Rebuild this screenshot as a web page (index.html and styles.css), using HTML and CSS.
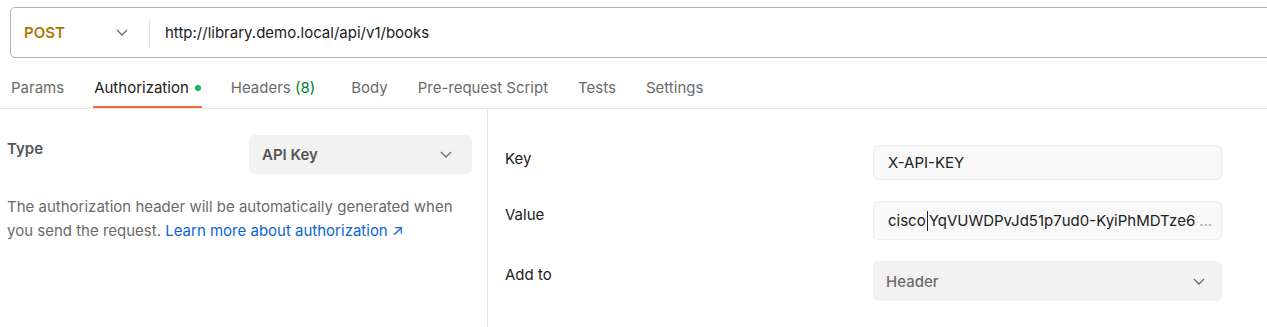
FILE: index.html
```html
<!DOCTYPE html>
<html lang="en">
<head>
<meta charset="utf-8">
<title>Request</title>
<link rel="stylesheet" href="styles.css">
</head>
<body>
<div class="app">
  <div class="top">
    <div class="urlbar">
      <div class="method">
        <span class="method-name">POST</span>
        <svg class="chev" width="12" height="7" viewBox="0 0 12 7"><path d="M1 1l5 5 5-5" fill="none" stroke="#6b6b6b" stroke-width="1.3"/></svg>
      </div>
      <div class="divider"></div>
      <div class="url">http://library.demo.local/api/v1/books</div>
    </div>
  </div>
  <nav class="tabs">
    <div class="tab">Params</div>
    <div class="tab active">Authorization<span class="dot"></span></div>
    <div class="tab tab-headers">Headers <span class="count">(8)</span></div>
    <div class="tab">Body</div>
    <div class="tab">Pre-request Script</div>
    <div class="tab">Tests</div>
    <div class="tab">Settings</div>
  </nav>
  <div class="content">
    <section class="left">
      <div class="type-row">
        <div class="type-label">Type</div>
        <div class="select type-select">
          <span>API Key</span>
          <svg class="chev" width="12" height="7" viewBox="0 0 12 7"><path d="M1 1l5 5 5-5" fill="none" stroke="#6b6b6b" stroke-width="1.3"/></svg>
        </div>
      </div>
      <div class="desc">
        <div class="desc-line">The authorization header will be automatically generated when</div>
        <div class="desc-line">you send the request. <a class="link" href="#">Learn more about authorization ↗</a></div>
      </div>
    </section>
    <section class="right">
      <div class="row">
        <div class="label">Key</div>
        <div class="input key-input">X-API-KEY</div>
      </div>
      <div class="row">
        <div class="label">Value</div>
        <div class="input value-input"><span>cisco</span><span class="caret"></span><span>YqVUWDPvJd51p7ud0-KyiPhMDTze6</span><span class="more">...</span></div>
      </div>
      <div class="row">
        <div class="label">Add to</div>
        <div class="select addto-select">
          <span>Header</span>
          <svg class="chev" width="12" height="7" viewBox="0 0 12 7"><path d="M1 1l5 5 5-5" fill="none" stroke="#6b6b6b" stroke-width="1.3"/></svg>
        </div>
      </div>
    </section>
  </div>
</div>
</body>
</html>
```

FILE: styles.css
```css
* { box-sizing: border-box; }
html, body {
  margin: 0;
  padding: 0;
  background: #ffffff;
}
body {
  font-family: Inter, "Noto Sans", "Liberation Sans", sans-serif;
  font-size: 15px;
  color: #212121;
  overflow: hidden;
  width: 1267px;
  height: 327px;
}
.app {
  width: 1267px;
}
.top {
  padding: 7px 0 0 10px;
  overflow: hidden;
}
.urlbar {
  display: flex;
  align-items: center;
  height: 51px;
  margin-right: -20px;
  border: 1px solid #b3b3b3;
  border-radius: 5px;
}
.method {
  display: flex;
  align-items: center;
  justify-content: space-between;
  width: 138px;
  padding: 0 21px 0 13px;
}
.method-name {
  font-weight: 600;
  font-size: 15px;
  color: #ad7a03;
}
.chev { display: block; }
.divider {
  width: 1px;
  height: 30px;
  background: #e6e6e6;
}
.url {
  padding-left: 15px;
  color: #212121;
}
.tabs {
  display: flex;
  gap: 30px;
  padding-left: 11px;
  height: 51px;
  border-bottom: 1px solid #e6e6e6;
}
.tab {
  display: flex;
  align-items: center;
  height: 50px;
  padding-top: 9px;
  color: #6b6b6b;
  position: relative;
  white-space: pre;
}
.tab-headers {
  margin-right: 6px;
}
.tab.active {
  color: #212121;
}
.tab.active::after {
  content: "";
  position: absolute;
  left: -1px;
  right: -1px;
  bottom: 0;
  height: 2px;
  background: #f26b3a;
}
.dot {
  width: 6px;
  height: 6px;
  margin-left: 6px;
  border-radius: 50%;
  background: #0cbb52;
}
.count { color: #007f31; }
.content {
  display: flex;
  height: 218px;
}
.left {
  width: 488px;
  border-right: 1px solid #e6e6e6;
  padding: 26px 15px 0 7px;
}
.type-row {
  display: flex;
  justify-content: space-between;
  align-items: flex-start;
}
.type-label {
  font-weight: 600;
  color: #555555;
  padding-top: 4px;
}
.select {
  display: flex;
  align-items: center;
  justify-content: space-between;
  background: #f2f2f2;
  border-radius: 5px;
}
.type-select {
  width: 223px;
  height: 39px;
  padding: 0 20px 0 13px;
  font-weight: 600;
  color: #555555;
}
.desc {
  margin-top: 21px;
  line-height: 24px;
  color: #6b6b6b;
}
.desc-line {
  white-space: nowrap;
}
.link {
  color: #0b66d6;
  text-decoration: none;
}
.right {
  flex: 1;
  padding: 36px 45px 0 17px;
  display: flex;
  flex-direction: column;
  gap: 21px;
}
.row {
  display: grid;
  grid-template-columns: 368px 349px;
  align-items: start;
}
.label {
  color: #212121;
  padding-top: 4px;
}
.input {
  display: flex;
  align-items: center;
  background: #f9f9f9;
  border: 1px solid #ededed;
  border-radius: 5px;
  padding: 0 14px;
  white-space: nowrap;
  overflow: hidden;
}
.key-input { height: 35px; }
.value-input { height: 39px; }
.caret {
  flex: none;
  width: 1px;
  height: 20px;
  border-left: 1px solid #212121;
  margin: 0 1px;
}
.more {
  color: #a6a6a6;
  margin-left: 4px;
}
.addto-select {
  height: 40px;
  padding: 0 17px 0 13px;
  font-weight: 500;
  color: #6b6b6b;
}
```
